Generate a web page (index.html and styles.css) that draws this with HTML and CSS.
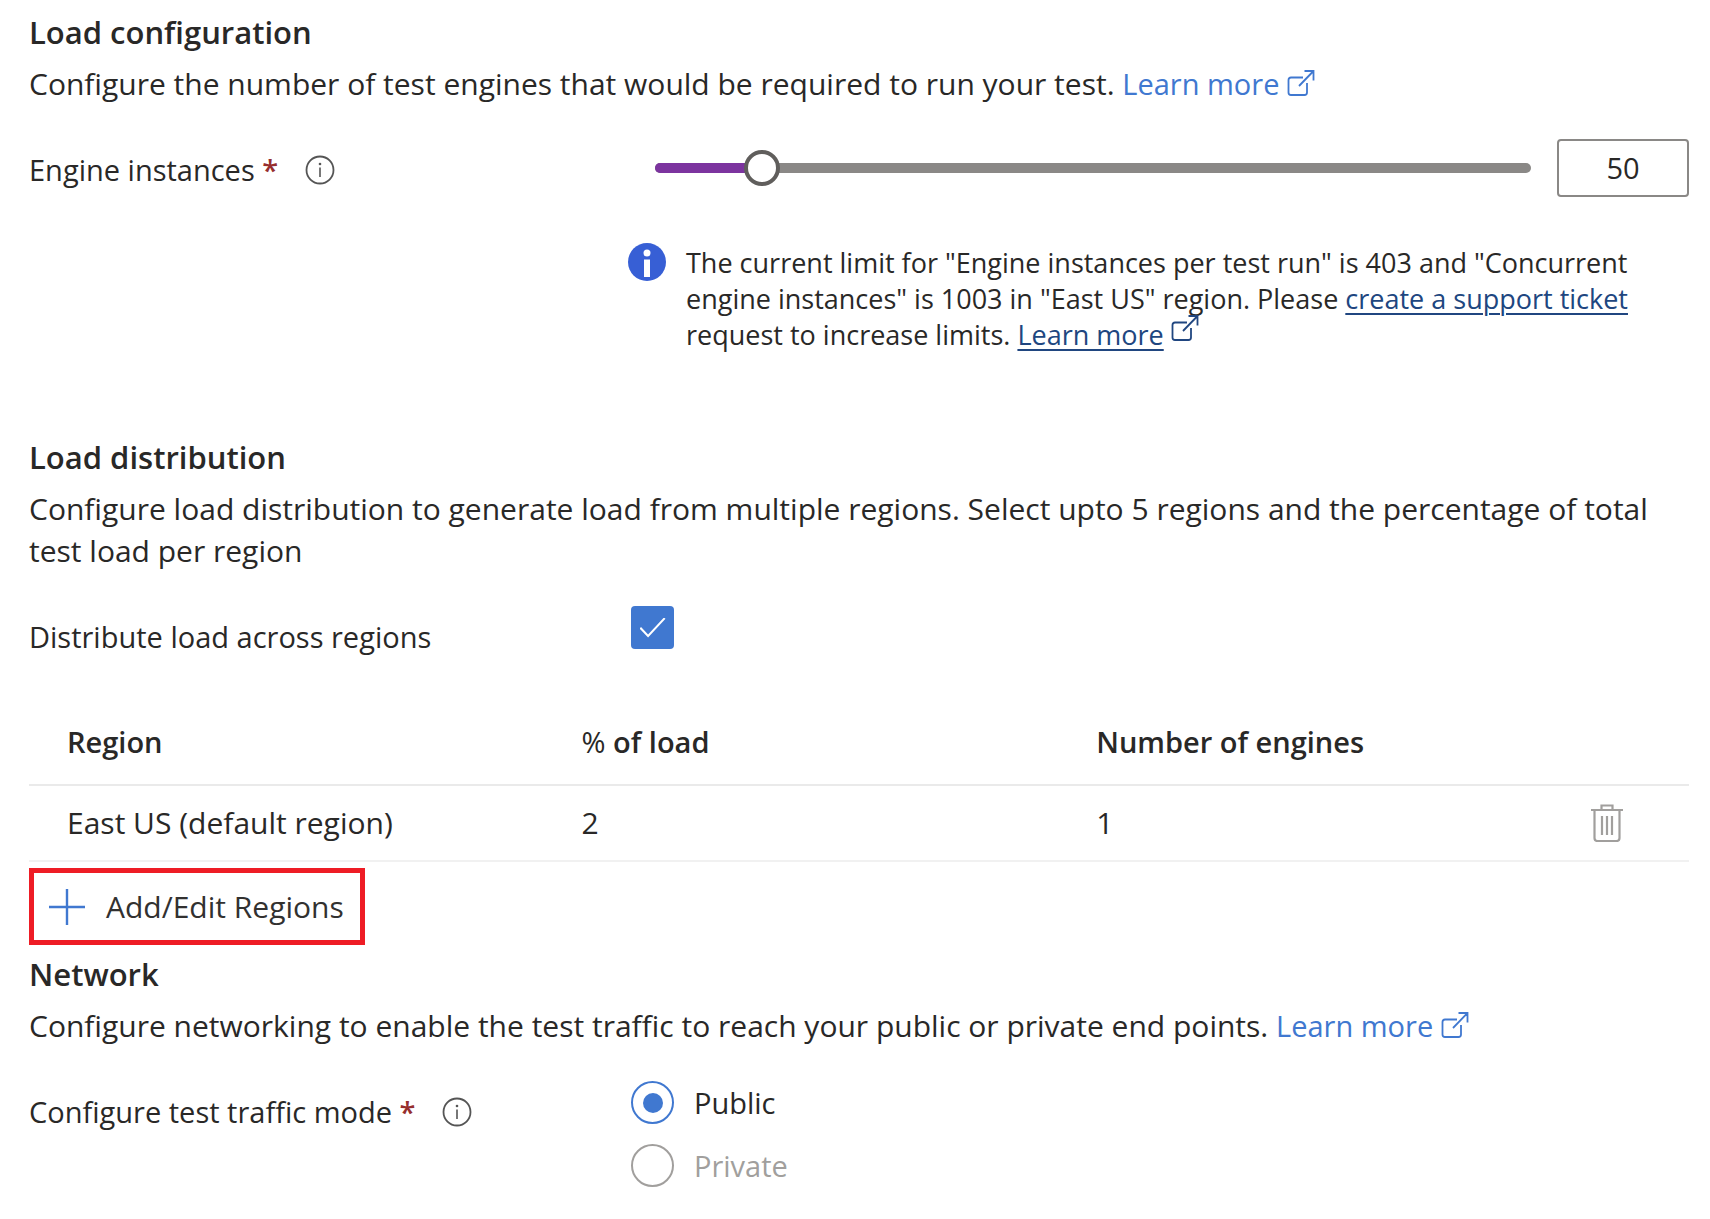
FILE: index.html
```html
<!DOCTYPE html>
<html lang="en">
<head>
<meta charset="utf-8">
<meta name="viewport" content="width=device-width, initial-scale=1">
<title>Load test configuration</title>
<link rel="stylesheet" href="styles.css">
</head>
<body>
<svg class="sprite" aria-hidden="true">
  <symbol id="external" viewBox="0 0 28 28"><path d="M16 8.500H4Q1.500 8.500 1.500 11V23.500Q1.500 26 4 26H17.500Q20 26 20 23.500V14M12 17 26.500 2M17.500 2H26.500V11.500" fill="none" stroke="currentColor" stroke-width="1.800"/></symbol>
  <symbol id="info" viewBox="0 0 30 30"><circle cx="15" cy="15" r="13.500" fill="none" stroke="currentColor" stroke-width="1.800"/><path d="M15 12.500V22" stroke="currentColor" stroke-width="1.600"/><circle cx="15" cy="9" r="1.300" fill="currentColor"/></symbol>
</svg>
<main class="page">
  <section class="section">
    <h2 class="title">Load configuration</h2>
    <p class="description">Configure the number of test engines that would be required to run your test. <a class="link" href="#">Learn more <svg class="external"><use href="#external"/></svg></a></p>
    <div class="field">
      <div class="field-label"><label for="engines">Engine instances <span class="required">*</span></label><svg class="info"><use href="#info"/></svg></div>
      <div class="slider-row">
        <div class="slider">
          <div class="track"><div class="track-fill" style="width: 12.1%"></div></div>
          <input class="range" id="engines" type="range" min="1" max="403" value="50">
        </div>
        <input class="number" type="text" value="50" aria-label="Engine instances value">
      </div>
    </div>
    <div class="notice">
      <svg class="notice-icon" viewBox="0 0 38 38"><circle cx="19" cy="19" r="19" fill="#375fd5"/><circle cx="19" cy="10" r="3.500" fill="#fff"/><path d="M16 16.500H22V34H16Z" fill="#fff"/></svg>
      <p class="notice-text">The current limit for "Engine instances per test run" is 403 and "Concurrent engine instances" is 1003 in "East US" region. Please <a class="notice-link" href="#">create a support ticket</a> request to increase limits. <a class="notice-link" href="#">Learn more</a> <svg class="external notice-external"><use href="#external"/></svg></p>
    </div>
  </section>

  <section class="section distribution">
    <h2 class="title">Load distribution</h2>
    <p class="description">Configure load distribution to generate load from multiple regions. Select upto 5 regions and the percentage of total test load per region</p>
    <div class="field">
      <label class="field-label" for="distribute">Distribute load across regions</label>
      <div class="choices"><input class="checkbox" id="distribute" type="checkbox" checked></div>
    </div>
    <table class="regions">
      <thead><tr><th class="col">Region</th><th class="col"><span class="percent">%</span> of load</th><th class="col">Number of engines</th><th class="col-action"></th></tr></thead>
      <tbody><tr><td>East US (default region)</td><td>2</td><td>1</td><td class="action"><button class="delete" type="button" aria-label="Delete region"><svg class="trash" viewBox="0 0 32 38"><path d="M0 6H32M10.500 5V1.500H21.500V5M3.500 7V34Q3.500 37 6.500 37H25.500Q28.500 37 28.500 34V7M11 12V31M16 12V31M21 12V31" fill="none" stroke="currentColor" stroke-width="2.200"/></svg></button></td></tr></tbody>
    </table>
    <button class="add" type="button"><svg class="plus" viewBox="0 0 36 36"><path d="M0 18H36M18 0V36" stroke="currentColor" stroke-width="2.400"/></svg>Add/Edit Regions</button>
  </section>

  <section class="section network">
    <h2 class="title">Network</h2>
    <p class="description">Configure networking to enable the test traffic to reach your public or private end points. <a class="link" href="#">Learn more <svg class="external"><use href="#external"/></svg></a></p>
    <div class="field">
      <div class="field-label"><span id="mode">Configure test traffic mode <span class="required">*</span></span><svg class="info"><use href="#info"/></svg></div>
      <div class="choices" role="radiogroup" aria-labelledby="mode">
        <label class="option"><input class="radio" type="radio" name="mode" checked>Public</label>
        <label class="option option-disabled"><input class="radio" type="radio" name="mode" disabled>Private</label>
      </div>
    </div>
  </section>
</main>
</body>
</html>
```
FILE: styles.css
```css
* { box-sizing: border-box; }
body {
  margin: 0;
  background: #fff;
  color: #292827;
  font-family: "Segoe UI", "Open Sans", "Noto Sans", sans-serif;
  font-size: 29px;
  line-height: 42px;
}
.sprite { display: none; }
.page { padding: 10px 21px 32px 29px; }
.title { margin: 0 0 9px; font-size: 31px; line-height: 44px; font-weight: 600; }
.description { margin: 0 0 34px; font-size: 30px; }
.link { color: #4078d0; font-size: 29px; text-decoration: none; }
.external { width: 28px; height: 28px; vertical-align: -2px; }

.field { display: grid; grid-template-columns: 602px 1fr; }
.field-label { display: flex; align-items: center; align-self: start; padding-top: 10px; }
.required { color: #962e2e; font-weight: 600; }
.info { width: 30px; height: 30px; margin-left: 27px; color: #555; }

.slider-row { display: flex; align-items: center; gap: 26px; padding-left: 24px; }
.slider { flex: 1; display: grid; align-items: center; }
.track { grid-area: 1 / 1; height: 10px; border-radius: 5px; background: #8a8886; overflow: hidden; }
.track-fill { height: 10px; background: #7c349f; }
.range {
  grid-area: 1 / 1;
  appearance: none;
  height: 36px;
  margin: 0 -18px;
  background: transparent;
}
.range::-webkit-slider-thumb {
  appearance: none;
  width: 36px;
  height: 36px;
  border: 4px solid #605e5c;
  border-radius: 50%;
  background: #fff;
}
.number {
  width: 132px;
  height: 58px;
  padding: 0 0 2px;
  border: 2px solid #8a8886;
  border-radius: 4px;
  color: inherit;
  font: inherit;
  text-align: center;
}

.notice { display: flex; gap: 20px; margin-top: 46px; padding-left: 599px; }
.notice-icon { flex: none; width: 38px; height: 38px; }
.notice-text { margin: 0; padding-top: 2px; font-size: 27px; line-height: 36px; }
.notice-link { color: #204680; text-underline-offset: 4px; text-decoration-thickness: 2px; }
.notice-external { margin-top: -8px; color: #204680; vertical-align: 3px; }

.distribution { margin-top: 82px; }
.choices { display: flex; flex-direction: column; gap: 20px; }
.checkbox, .radio { appearance: none; flex: none; width: 43px; height: 43px; margin: 0; display: grid; place-items: center; }
.checkbox { border-radius: 4px; background: #4078d0; }
.checkbox::before {
  content: "";
  width: 26px;
  height: 20px;
  background: #fff;
  clip-path: polygon(0 55%, 6% 48%, 33% 85%, 94% 0, 100% 6%, 33% 100%);
}

.regions { width: 100%; margin-top: 42px; border-collapse: collapse; table-layout: fixed; font-size: 30px; }
.regions th { padding: 21px 38px; text-align: left; font-size: 29px; font-weight: 600; border-bottom: 2px solid #eaeaea; }
.regions td { padding: 16px 38px; border-bottom: 2px solid #f1f1f1; }
.regions .percent { font-weight: 400; }
.col { width: 31%; }
.regions .action { padding: 0 66px 0 0; }
.delete { display: block; margin-left: auto; padding: 0; border: 0; background: none; color: #a19f9d; }
.trash { display: block; width: 32px; height: 38px; }

.add {
  display: flex;
  align-items: center;
  gap: 21px;
  height: 77px;
  margin-top: 6px;
  padding: 0 16px 0 15px;
  border: 5px solid #ee1c25;
  background: none;
  color: #323130;
  font: inherit;
  font-size: 30px;
}
.plus { width: 36px; height: 36px; color: #4078d0; }

.network { margin-top: 7px; }
.option { display: flex; align-items: center; align-self: start; gap: 20px; height: 43px; }
.option-disabled { color: #a19f9d; }
.radio { border: 2px solid #a19f9d; border-radius: 50%; }
.radio:checked { border-color: #4078d0; }
.radio:checked::before { content: ""; width: 20px; height: 20px; border-radius: 50%; background: #4078d0; }
```
